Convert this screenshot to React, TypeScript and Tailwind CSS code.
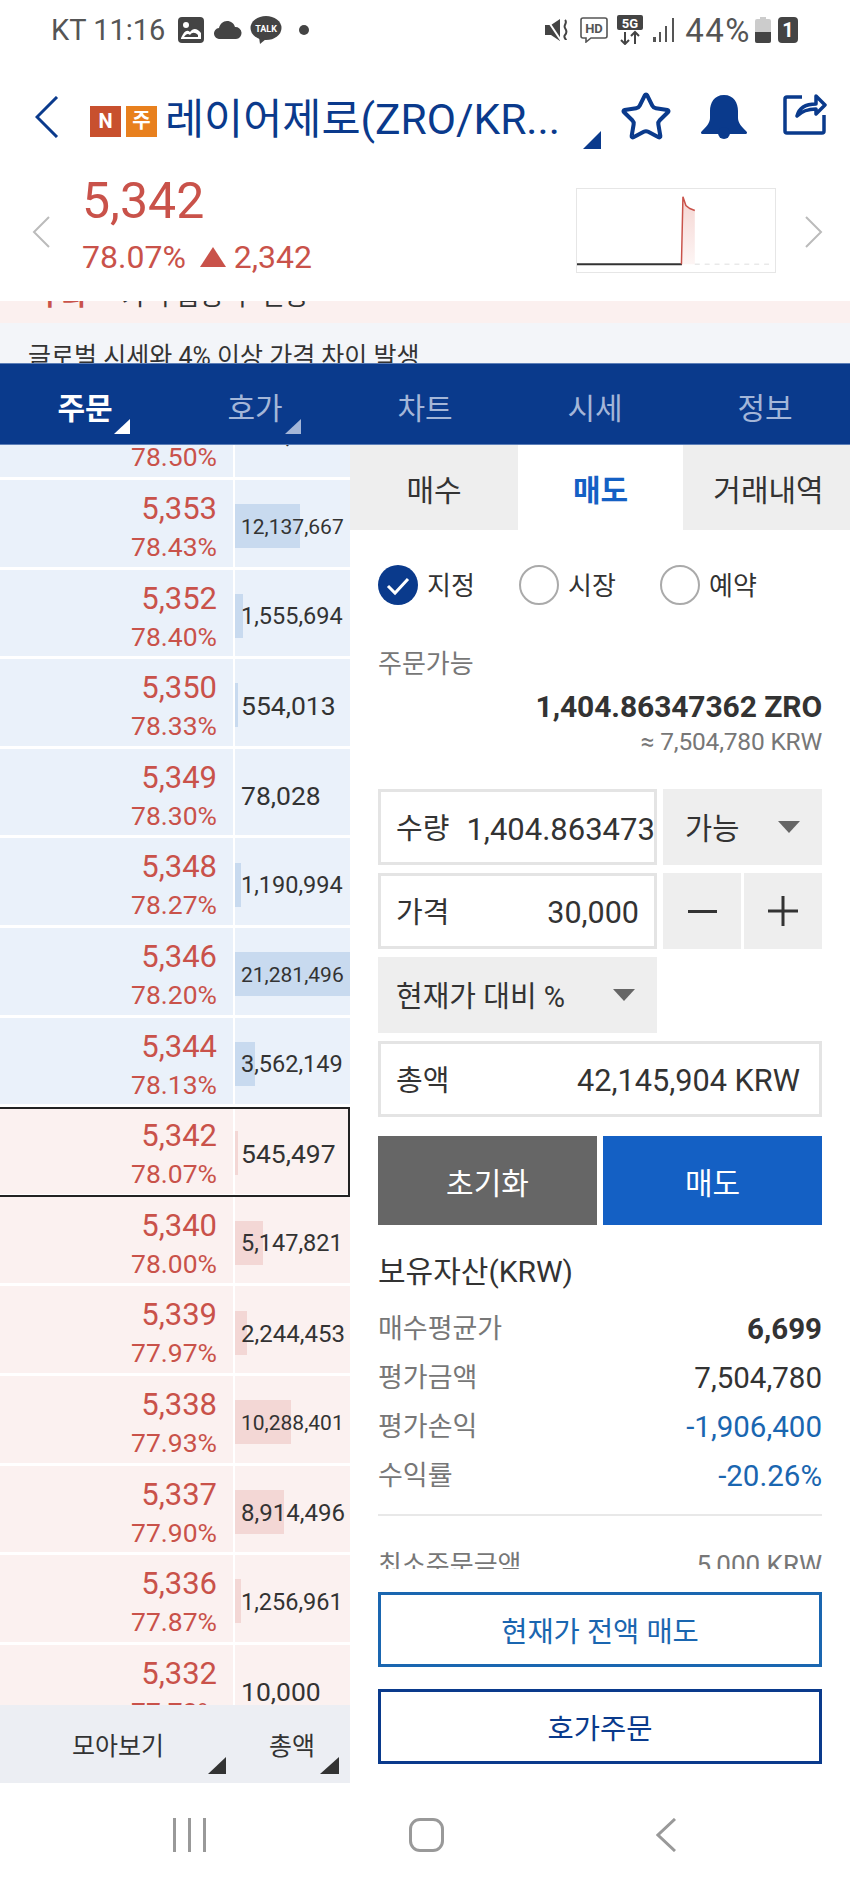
import { Star } from "lucide-react";

type OrderRow = {
  price: string;
  pct: string;
  vol: string;
  bar: number;
  size: string;
  side: "sell" | "buy";
  current?: boolean;
};

const rows: OrderRow[] = [
  { price: "5,355", pct: "78.50%", vol: "123,456", bar: 0, size: "-translate-y-[3px] text-[26.5px]", side: "sell" },
  { price: "5,353", pct: "78.43%", vol: "12,137,667", bar: 65, size: "text-[21px]", side: "sell" },
  { price: "5,352", pct: "78.40%", vol: "1,555,694", bar: 8, size: "text-[23.5px]", side: "sell" },
  { price: "5,350", pct: "78.33%", vol: "554,013", bar: 3, size: "text-[26.5px]", side: "sell" },
  { price: "5,349", pct: "78.30%", vol: "78,028", bar: 0, size: "text-[26.5px]", side: "sell" },
  { price: "5,348", pct: "78.27%", vol: "1,190,994", bar: 6, size: "text-[23.5px]", side: "sell" },
  { price: "5,346", pct: "78.20%", vol: "21,281,496", bar: 115, size: "text-[21px]", side: "sell" },
  { price: "5,344", pct: "78.13%", vol: "3,562,149", bar: 20, size: "text-[23.5px]", side: "sell" },
  { price: "5,342", pct: "78.07%", vol: "545,497", bar: 3, size: "text-[26.5px]", side: "buy", current: true },
  { price: "5,340", pct: "78.00%", vol: "5,147,821", bar: 28, size: "text-[23.5px]", side: "buy" },
  { price: "5,339", pct: "77.97%", vol: "2,244,453", bar: 12, size: "text-[24px]", side: "buy" },
  { price: "5,338", pct: "77.93%", vol: "10,288,401", bar: 56, size: "text-[21px]", side: "buy" },
  { price: "5,337", pct: "77.90%", vol: "8,914,496", bar: 49, size: "text-[24px]", side: "buy" },
  { price: "5,336", pct: "77.87%", vol: "1,256,961", bar: 6, size: "text-[23.5px]", side: "buy" },
  { price: "5,332", pct: "77.73%", vol: "10,000", bar: 0, size: "text-[26.5px]", side: "buy" },
];

function Corner({ className }: { className: string }) {
  return (
    <svg viewBox="0 0 10 10" preserveAspectRatio="none" className={className}>
      <polygon points="10,0 10,10 0,10" fill="currentColor" />
    </svg>
  );
}

function StatusBar() {
  return (
    <div className="flex h-[60px] items-center pl-[51px] pr-[52px] text-[#555]">
      <span className="text-[29px] leading-none">KT 11:16</span>
      <svg viewBox="0 0 26 26" className="ml-[13px] h-[26px] w-[26px]">
        <rect width="26" height="26" rx="4" fill="#444" />
        <circle cx="8" cy="8" r="3" fill="#fff" />
        <path d="M3 21c3-7 6-9 9-6 3-4 7-4 11 1v6H3z" fill="#fff" />
        <path d="M6 20c2-3 4-4 6-2 2-3 5-3 8 0v2H6z" fill="#444" />
      </svg>
      <svg viewBox="0 0 28 18" className="ml-[10px] h-[18px] w-[28px]">
        <path d="M6 18a5.5 5.5 0 0 1-1-11C6 3 9 0 13 0s7 2.500 8 6a6 6 0 0 1 1 12H6z" fill="#444" />
      </svg>
      <svg viewBox="0 0 32 28" className="ml-[8px] h-[28px] w-[32px]">
        <ellipse cx="16" cy="12" rx="15.500" ry="12" fill="#444" />
        <path d="M9 21l1 7 6-5z" fill="#444" />
        <text x="16" y="15.500" textAnchor="middle" fontSize="9" fontWeight="700" fill="#fff" fontFamily="Roboto, sans-serif">TALK</text>
      </svg>
      <span className="ml-[17px] h-[10px] w-[10px] rounded-full bg-[#444]" />

      <div className="ml-auto flex items-center">
        <svg viewBox="0 0 24 26" className="h-[26px] w-[24px]">
          <path d="M0 8h6l9-6v22l-9-6H0z" fill="#444" />
          <path d="M1 1l16 24" stroke="#fff" strokeWidth="2" />
          <path d="M20 3c3 3-2 5 0 8s2 5 0 7 1 4 1 5" stroke="#444" strokeWidth="2" fill="none" />
        </svg>
        <svg viewBox="0 0 28 26" className="ml-[11px] h-[26px] w-[28px]">
          <path d="M3 1h22a2 2 0 0 1 2 2v16a2 2 0 0 1-2 2H11l-5 4v-4H3a2 2 0 0 1-2-2V3a2 2 0 0 1 2-2z" fill="none" stroke="#555" strokeWidth="1.600" />
          <text x="14" y="16" textAnchor="middle" fontSize="13" fontWeight="700" fill="#555" fontFamily="Roboto, sans-serif">HD</text>
        </svg>
        <svg viewBox="0 0 26 30" className="ml-[9px] h-[30px] w-[26px]">
          <rect width="26" height="15" rx="2" fill="#444" />
          <text x="13" y="12.500" textAnchor="middle" fontSize="13" fontWeight="700" fill="#fff" fontFamily="Roboto, sans-serif">5G</text>
          <path d="M8 17v12M4 25l4 4 4-4M18 29V17M14 21l4-4 4 4" stroke="#444" strokeWidth="2" fill="none" />
        </svg>
        <svg viewBox="0 0 22 24" className="ml-[10px] h-[24px] w-[22px]">
          <rect x="0" y="19" width="3" height="5" fill="#555" />
          <rect x="6" y="14" width="2" height="10" fill="#555" />
          <rect x="12" y="8" width="2" height="16" fill="#555" />
          <rect x="19" y="0" width="2" height="24" fill="#555" />
        </svg>
        <span className="ml-[10px] text-[33px] leading-none tracking-[1.5px]">44%</span>
        <svg viewBox="0 0 16 26" className="ml-[4px] h-[26px] w-[16px]">
          <path d="M5 0h6v2h3a2 2 0 0 1 2 2v20a2 2 0 0 1-2 2H2a2 2 0 0 1-2-2V4a2 2 0 0 1 2-2h3z" fill="#ccc" />
          <path d="M0 15h16v9a2 2 0 0 1-2 2H2a2 2 0 0 1-2-2z" fill="#444" />
        </svg>
        <span className="ml-[7px] flex h-[26px] w-[20px] items-center justify-center rounded-[4px] bg-[#444] text-[20px] font-bold leading-none text-white">
          1
        </span>
      </div>
    </div>
  );
}

function TitleBar() {
  return (
    <div className="flex h-[100px] items-center pt-[14px] text-[#0a3a8c]">
      <svg viewBox="0 0 24 42" className="ml-[35px] h-[42px] w-[24px]">
        <polyline points="22,1 2,21 22,41" fill="none" stroke="currentColor" strokeWidth="3" />
      </svg>
      <span className="ml-[31px] mt-[8px] flex h-[31px] w-[31px] items-center justify-center bg-[#c8502e] text-[20px] font-bold leading-none text-white">
        N
      </span>
      <span className="ml-[5px] mt-[8px] flex h-[31px] w-[31px] items-center justify-center bg-[#e8801e] text-[20px] font-bold leading-none text-white">
        주
      </span>
      <span className="ml-[8px] mr-[2px] mt-[6px] w-[395px] whitespace-nowrap text-[42.5px] leading-none">
        레이어제로(ZRO/KR...
      </span>
      <Corner className="ml-[21px] mt-[46px] h-[18px] w-[18px] shrink-0" />
      <Star size={54} strokeWidth={1.8} className="ml-[18px] shrink-0" />
      <svg viewBox="0 0 46 44" className="ml-[28px] h-[44px] w-[46px] shrink-0" fill="currentColor">
        <path d="M23 0C13 0 9 8 9 16v7c0 5-4 9-8 13-2 2-1 3 1 3h42c2 0 3-1 1-3-4-4-8-8-8-13v-7C37 8 33 0 23 0z" />
        <circle cx="23" cy="38" r="6" />
      </svg>
      <svg viewBox="0 0 44 44" className="mb-[8px] ml-[36px] h-[44px] w-[44px] shrink-0" fill="none" stroke="currentColor" strokeWidth="3.5">
        <path d="M19 6H4a2 2 0 0 0-2 2v32a2 2 0 0 0 2 2h35a2 2 0 0 0 2-2V24" />
        <path d="M14 25c2-8 9-12 19-12V5l9 9-9 9v-5c-8 0-14 2-19 7z" strokeLinejoin="round" />
      </svg>
    </div>
  );
}

function PriceBar() {
  return (
    <div className="flex h-[141px] text-[#c9524a]">
      <svg viewBox="0 0 18 32" className="ml-[32px] mt-[56px] h-[32px] w-[18px]">
        <polyline points="17,1 2,16 17,31" fill="none" stroke="#bbb" strokeWidth="2" />
      </svg>
      <div className="ml-[32px] w-[300px]">
        <div className="mt-[13px] text-[50px] leading-[56px]">5,342</div>
        <div className="mt-[10px] flex items-center text-[32px] leading-[36px]">
          <span>78.07%</span>
          <svg viewBox="0 0 26 20" className="ml-[14px] h-[20px] w-[26px]">
            <polygon points="13,0 26,20 0,20" fill="currentColor" />
          </svg>
          <span className="ml-[8px]">2,342</span>
        </div>
      </div>
      <svg viewBox="0 0 200 85" preserveAspectRatio="none" className="ml-[194px] mt-[28px] h-[85px] w-[200px] border border-[#e6e6e6]">
        <defs>
          <linearGradient id="spark" x1="0" y1="0" x2="0" y2="1">
            <stop offset="0" stopColor="#f5d5d2" />
            <stop offset="1" stopColor="#fdf5f4" />
          </linearGradient>
        </defs>
        <path d="M106 77 L107 8 L110 17 L114 20 L119 22 V77 Z" fill="url(#spark)" />
        <path d="M119 77 H199" stroke="#ddd" strokeWidth="1" strokeDasharray="5 5" />
        <path d="M0 77 H106" stroke="#333" strokeWidth="2" />
        <path d="M105.500 77 L107 8 L110 17 L114 20 L119 22" stroke="#c9524a" strokeWidth="1.500" fill="none" />
      </svg>
      <svg viewBox="0 0 18 32" className="ml-[29px] mt-[56px] h-[32px] w-[18px]">
        <polyline points="1,1 16,16 1,31" fill="none" stroke="#bbb" strokeWidth="2" />
      </svg>
    </div>
  );
}

function NoticeStack() {
  return (
    <div>
      <div className="flex h-[22px] items-end overflow-hidden bg-[#fbf0ef]">
        <div className="mb-[7px] flex h-[40px] shrink-0 items-center whitespace-nowrap pl-[38px] text-[26px] leading-[40px]">
          <span className="font-bold text-[#c9524a]">주의</span>
          <span className="ml-[36px] text-[#333]">가격 급등 후 변동</span>
        </div>
      </div>
      <div className="flex h-[40px] items-start overflow-hidden bg-[#f3f5f9] pl-[28px] pt-[17px] text-[25px] leading-[34px] text-[#333]">
        글로벌 시세와 4% 이상 가격 차이 발생
      </div>
    </div>
  );
}

const tabs = ["주문", "호가", "차트", "시세", "정보"];

function MainTabs() {
  return (
    <div className="flex h-[82px] border-y border-[#5d7fb8] bg-[#0a3a8c]">
      {tabs.map((t, i) => (
        <div
          key={t}
          className={`relative flex flex-1 items-center justify-center pt-[9px] text-[30px] leading-none ${
            i === 0 ? "font-bold text-white" : "text-[#a4b6d8]"
          }`}
        >
          {t}
          {i === 0 && <Corner className="absolute left-[114px] top-[55px] h-[15px] w-[16px] text-white" />}
          {i === 1 && <Corner className="absolute left-[115px] top-[55px] h-[15px] w-[16px] text-[#a4b6d8]" />}
        </div>
      ))}
    </div>
  );
}

function Row({ r }: { r: OrderRow }) {
  const isSell = r.side === "sell";
  return (
    <div className="relative flex h-[89.600px] shrink-0 pb-[3px]">
      <div
        className={`flex w-[233px] flex-col items-end pr-[16px] ${isSell ? "bg-[#eaf1fa]" : "bg-[#fbf1f0]"} text-[#c9524a]`}
      >
        <div className="mt-[11px] text-[31px] leading-[36px]">{r.price}</div>
        <div className="mt-[4px] text-[26.5px] leading-[32px]">{r.pct}</div>
      </div>
      <div
        className={`ml-[2px] flex w-[115px] items-center pt-[6px] ${isSell ? "bg-[#eaf1fa]" : "bg-[#fbf1f0]"}`}
      >
        <div className="relative flex h-[44px] w-full items-center">
          <div
            className={`absolute left-0 top-0 h-full ${isSell ? "bg-[#c8daef]" : "bg-[#f3d7d5]"}`}
            style={{ width: r.bar }}
          />
          <span className={`relative ml-[6px] whitespace-nowrap pt-[2px] leading-none text-[#333] ${r.size}`}>{r.vol}</span>
        </div>
      </div>
      {r.current && <div className="absolute inset-0 border-2 border-l-0 border-[#222]" />}
    </div>
  );
}

function OrderBook() {
  return (
    <div className="flex w-[350px] shrink-0 flex-col">
      <div className="h-[1260px] overflow-hidden">
        <div className="-mt-[54.600px] flex flex-col">
          {rows.map((r) => (
            <Row key={r.price} r={r} />
          ))}
        </div>
      </div>
      <div className="relative flex h-[78px] bg-[#eceef3] text-[25px] leading-none text-[#333]">
        <div className="flex w-[240px] items-center pt-[4px] pl-[72px]">모아보기</div>
        <div className="flex flex-1 items-center pt-[4px] pl-[29px]">총액</div>
        <Corner className="absolute left-[208px] top-[52px] h-[17px] w-[18px] text-[#333]" />
        <Corner className="absolute left-[320px] top-[52px] h-[17px] w-[19px] text-[#333]" />
      </div>
    </div>
  );
}

function Radio({ label, on, className }: { label: string; on?: boolean; className: string }) {
  return (
    <div className={`flex items-center ${className}`}>
      {on ? (
        <svg viewBox="0 0 40 40" className="h-[40px] w-[40px]">
          <circle cx="20" cy="20" r="20" fill="#0a3a8c" />
          <polyline points="10,21 17,28 30,14" fill="none" stroke="#fff" strokeWidth="3" />
        </svg>
      ) : (
        <span className="h-[40px] w-[40px] rounded-full border-2 border-[#aaa]" />
      )}
      <span className="ml-[9px] pt-[2px] text-[26px] leading-none text-[#333]">{label}</span>
    </div>
  );
}

function Stat({ label, value, valueClass }: { label: string; value: string; valueClass: string }) {
  return (
    <div className="flex h-[49px] items-center justify-between">
      <span className="text-[27px] leading-none text-[#777]">{label}</span>
      <span className={`text-[29.500px] leading-none ${valueClass}`}>{value}</span>
    </div>
  );
}

function Caret() {
  return (
    <svg viewBox="0 0 22 12" className="h-[12px] w-[22px]">
      <polygon points="0,0 22,0 11,12" fill="#666" />
    </svg>
  );
}

function OrderForm() {
  return (
    <div className="flex min-w-0 flex-1 flex-col">
      <div className="flex h-[85px] text-[30px] leading-none text-[#333]">
        <div className="flex w-[168px] items-center justify-center bg-[#eeeeee] pt-[6px]">매수</div>
        <div className="flex w-[165px] items-center justify-center bg-white pt-[6px] font-bold text-[#1460c4]">매도</div>
        <div className="flex flex-1 items-center justify-center bg-[#eeeeee] pl-[4px] pt-[6px]">거래내역</div>
      </div>

      <div className="h-[1039px] overflow-hidden px-[28px]">
        <div className="mt-[35px] flex">
          <Radio label="지정" on className="w-[141px]" />
          <Radio label="시장" className="w-[141px]" />
          <Radio label="예약" className="w-[130px]" />
        </div>
        <div className="mt-[44px] text-[26px] leading-[30px] text-[#777]">주문가능</div>
        <div className="mt-[10px] text-right text-[30px] font-bold leading-[36px] tracking-[-0.1px] text-[#333]">
          1,404.86347362 ZRO
        </div>
        <div className="mt-[3px] text-right text-[24.500px] leading-[28px] tracking-[-0.2px] text-[#777]">
          ≈ 7,504,780 KRW
        </div>

        <div className="mt-[33px] flex h-[76px] gap-[6px]">
          <div className="flex w-[279px] items-center border-[3px] border-[#e4e4e4] pl-[15px] pt-[5px] text-[#333]">
            <span className="shrink-0 whitespace-nowrap text-[29px] leading-none">수량</span>
            <span className="ml-[17px] shrink-0 whitespace-nowrap text-[31px] leading-none">1,404.863473</span>
          </div>
          <div className="flex flex-1 items-center justify-between bg-[#eeeeee] pl-[22px] pr-[22px] text-[29.500px] leading-none text-[#333]">
            <span className="pt-[5px]">가능</span>
            <Caret />
          </div>
        </div>
        <div className="mt-[8px] flex h-[76px] gap-[6px]">
          <div className="flex w-[279px] items-center justify-between border-[3px] border-[#e4e4e4] pl-[15px] pr-[15px] pt-[5px] text-[#333]">
            <span className="text-[29px] leading-none">가격</span>
            <span className="text-[30.500px] leading-none">30,000</span>
          </div>
          <div className="flex flex-1 gap-[3px]">
            <div className="flex flex-1 items-center justify-center bg-[#eeeeee]">
              <span className="h-[3px] w-[29px] bg-[#333]" />
            </div>
            <div className="flex flex-1 items-center justify-center bg-[#eeeeee]">
              <svg viewBox="0 0 30 30" className="h-[30px] w-[30px]">
                <path d="M0 15h30M15 0v30" stroke="#333" strokeWidth="3" />
              </svg>
            </div>
          </div>
        </div>
        <div className="mt-[8px] flex h-[76px] w-[279px] items-center justify-between bg-[#eeeeee] pl-[18px] pr-[22px] text-[29px] leading-none text-[#333]">
          <span className="pt-[5px]">현재가 대비 %</span>
          <Caret />
        </div>
        <div className="mt-[8px] flex h-[76px] items-center justify-between border-[3px] border-[#e4e4e4] pl-[15px] pr-[19px] pt-[5px] text-[#333]">
          <span className="text-[29px] leading-none">총액</span>
          <span className="text-[30.700px] leading-none">42,145,904 KRW</span>
        </div>
        <div className="mt-[19px] flex h-[89px] gap-[6px] text-[30px] leading-none text-white">
          <div className="flex w-[219px] items-center justify-center bg-[#666666] pt-[6px]">초기화</div>
          <div className="flex flex-1 items-center justify-center bg-[#1460c4] pt-[6px]">매도</div>
        </div>
        <div className="mt-[29px] text-[30px] leading-[36px] text-[#333]">보유자산(KRW)</div>
        <div className="mt-[15px]">
          <Stat label="매수평균가" value="6,699" valueClass="font-bold text-[#333]" />
          <Stat label="평가금액" value="7,504,780" valueClass="text-[#333]" />
          <Stat label="평가손익" value="-1,906,400" valueClass="text-[#1a66b0]" />
          <Stat label="수익률" value="-20.26%" valueClass="text-[#1a66b0]" />
        </div>
        <div className="mt-[13px] h-[2px] bg-[#e8e8e8]" />
        <div className="mt-[34px] flex items-center justify-between text-[26px] leading-[30px] text-[#777]">
          <span>최소주문금액</span>
          <span>5,000 KRW</span>
        </div>
      </div>

      <div className="px-[28px] pt-[23px]">
        <div className="flex h-[75px] items-center justify-center border-[3px] border-[#1a66b0] pt-[7px] text-[28.5px] leading-none text-[#1a66b0]">
          현재가 전액 매도
        </div>
        <div className="mt-[22px] flex h-[75px] items-center justify-center border-[3px] border-[#0a3a8c] pt-[7px] text-[28.5px] leading-none text-[#0a3a8c]">
          호가주문
        </div>
      </div>
    </div>
  );
}

function SystemNav() {
  return (
    <div className="flex h-[106px] items-start pt-[35px]">
      <svg viewBox="0 0 33 34" className="ml-[173px] h-[34px] w-[33px]">
        <path d="M1.500 0v34M16.500 0v34M31.500 0v34" stroke="#999" strokeWidth="3" />
      </svg>
      <span className="ml-[203px] h-[34px] w-[35px] rounded-[11px] border-[3px] border-[#999]" />
      <svg viewBox="0 0 20 34" className="ml-[212px] h-[34px] w-[20px]">
        <polyline points="19,1 2,17 19,33" fill="none" stroke="#999" strokeWidth="3" />
      </svg>
    </div>
  );
}

export default function App() {
  return (
    <div className="h-[1889px] w-[850px] overflow-hidden bg-white font-[Roboto,'Noto_Sans_CJK_KR',sans-serif]">
      <StatusBar />
      <TitleBar />
      <PriceBar />
      <NoticeStack />
      <MainTabs />
      <div className="flex h-[1338px]">
        <OrderBook />
        <OrderForm />
      </div>
      <SystemNav />
    </div>
  );
}
